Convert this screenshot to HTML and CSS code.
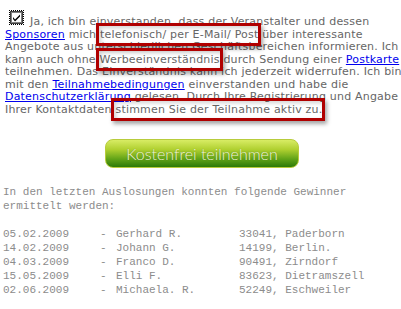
FILE: index.html
```html
<!DOCTYPE html>
<html lang="de">
  <head>
    <meta charset="UTF-8" />
    <title>Teilnahme</title>
    <link rel="stylesheet" href="styles.css">
  </head>
  <body>
    <div class="teilnahme">
      <p class="agree">
        <span class="check">
          <svg width="13" height="13" viewBox="0 0 13 13">
            <rect x="0.5" y="0.5" width="12" height="12" fill="#fff" stroke="#404040" />
            <rect x="1.5" y="1.5" width="10" height="10" fill="none" stroke="#808080" />
            <path d="M3 6 L5 8.5 L10 3.5 L10 5.5 L5 10.5 L3 8 Z" fill="#000" />
          </svg>
        </span>Ja, ich bin einverstanden, dass der Veranstalter und dessen<br>
        <a href="#">Sponsoren</a> mich <span class="mark m1">telefonisch/ per E-Mail/ Post</span> über interessante<br>
        Angebote aus unterschiedlichen Geschäftsbereichen informieren. Ich<br>
        kann auch ohne <span class="mark m2">Werbeeinverständnis</span> durch Sendung einer <a href="#">Postkarte</a><br>
        teilnehmen. Das Einverständnis kann ich jederzeit widerrufen. Ich bin<br>
        mit den <a href="#">Teilnahmebedingungen</a> einverstanden und habe die<br>
        <a href="#">Datenschutzerklärung</a> gelesen. Durch Ihre Registrierung und Angabe<br>
        Ihrer Kontaktdaten <span class="mark m3">stimmen Sie der Teilnahme aktiv zu.</span>
      </p>

      <div class="button-row">
        <a href="#" class="btn-join">Kostenfrei teilnehmen</a>
      </div>

      <div class="winners">
        <p class="intro">In den letzten Auslosungen konnten folgende Gewinner<br>ermittelt werden:</p>
        <div class="list">
          <span>05.02.2009</span><span>-</span><span>Gerhard R.</span><span>33041, Paderborn</span>
          <span>14.02.2009</span><span>-</span><span>Johann G.</span><span>14199, Berlin.</span>
          <span>04.03.2009</span><span>-</span><span>Franco D.</span><span>90491, Zirndorf</span>
          <span>15.05.2009</span><span>-</span><span>Elli F.</span><span>83623, Dietramszell</span>
          <span>02.06.2009</span><span>-</span><span>Michaela. R.</span><span>52249, Eschweiler</span>
        </div>
      </div>
    </div>
  </body>
</html>
```

FILE: styles.css
```css
body {
  margin: 0;
  background-color: #fff;
  font-family: "DejaVu Sans", Verdana, sans-serif;
  font-size: 11px;
  color: #666;
}

.teilnahme {
  width: 401px;
}

.agree {
  margin: 0;
  padding: 11px 0 0 5px;
  line-height: 12.5px;
  letter-spacing: 0.2px;
  white-space: nowrap;
}

.agree a {
  color: #0000ee;
}

.check {
  display: inline-block;
  width: 13px;
  height: 13px;
  margin: 0 7px 3px 5px;
  vertical-align: -2px;
  outline: 1px dotted #000;
  outline-offset: 0;
}

.check svg {
  display: block;
}

/* rote Markierungen */
.mark {
  position: relative;
}

.mark::after {
  content: "";
  position: absolute;
  top: -5px;
  bottom: -5px;
  left: -4px;
  right: -3px;
  border: 3px solid #b00000;
  box-shadow: 2px 3px 4px rgba(0, 0, 0, 0.35), inset 2px 2px 4px rgba(0, 0, 0, 0.18);
}

.button-row {
  display: flex;
  justify-content: center;
  margin-top: 23px;
  padding-left: 3px;
}

.btn-join {
  display: block;
  width: 192px;
  height: 27px;
  line-height: 27px;
  text-align: center;
  border: 1px solid #b8cc3c;
  border-radius: 8px;
  background: linear-gradient(#d8ec64 0%, #b0d030 35%, #62a418 70%, #2c7a08 100%);
  color: #f4f8dc;
  font-family: Lato, "Open Sans", sans-serif;
  font-weight: 300;
  font-size: 16px;
  text-decoration: none;
  text-shadow: 0 0 1px rgba(60, 90, 0, 0.5);
}

.winners {
  font-family: "Liberation Mono", "Courier New", monospace;
  font-size: 11px;
  line-height: 14px;
  color: #8c8c8c;
  padding-left: 3px;
  margin-top: 17px;
}

.intro {
  margin: 0 0 14px;
}

.list {
  display: grid;
  grid-template-columns: 97px 16px 123px auto;
}
```
